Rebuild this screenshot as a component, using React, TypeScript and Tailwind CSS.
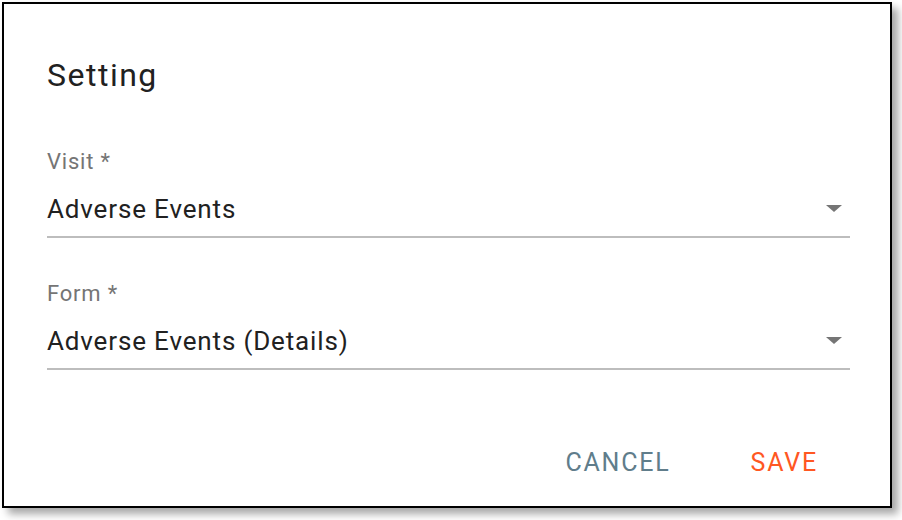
import React from "react";

function Arrow() {
  return (
    <svg width="16" height="8" viewBox="0 0 16 8" className="shrink-0">
      <polygon points="0,0 16,0 8,7" fill="#757575" />
    </svg>
  );
}

function Field({ label, value }: { label: string; value: string }) {
  return (
    <div className="flex flex-col">
      <div className="text-[22px] leading-[28px] tracking-[0.8px] text-[#757575]">{label}</div>
      <div className="mt-[17px] flex items-center justify-between border-b-2 border-[#bdbdbd] pb-[11px]">
        <span className="text-[26px] leading-[32px] tracking-[0.85px] text-[#212121]">{value}</span>
        <span className="mr-[8px]"><Arrow /></span>
      </div>
    </div>
  );
}

export default function App() {
  return (
    <div className="w-[902px] h-[520px] bg-white p-[2px]" style={{ fontFamily: "Roboto, 'Noto Sans', sans-serif" }}>
      <div className="w-[890px] h-[506px] border-2 border-black bg-white shadow-[6px_6px_8px_rgba(0,0,0,0.35)] flex flex-col pl-[43px] pr-[40px] pt-[51px]">
        <div className="text-[32px] leading-[40px] tracking-[1.5px] text-[#212121]">Setting</div>
        <div className="mt-[53px]">
          <Field label="Visit *" value="Adverse Events" />
        </div>
        <div className="mt-[42px]">
          <Field label="Form *" value="Adverse Events (Details)" />
        </div>
        <div className="mt-[77px] flex justify-end gap-[80px] pr-[32px]">
          <span className="text-[25px] leading-[32px] tracking-[1.8px] text-[#607d8b]">CANCEL</span>
          <span className="text-[25px] leading-[32px] tracking-[1.8px] text-[#ff5722]">SAVE</span>
        </div>
      </div>
    </div>
  );
}
